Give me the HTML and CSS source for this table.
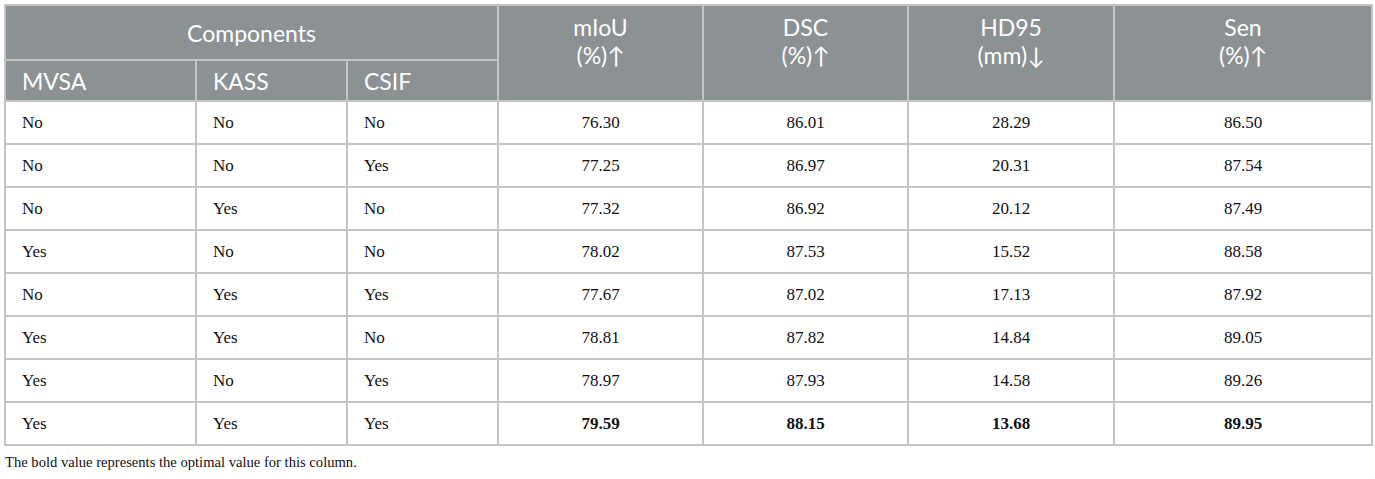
FILE: index.html
```html
<!DOCTYPE html>
<html>
<head>
<meta charset="utf-8">
<link rel="stylesheet" href="styles.css">
</head>
<body>
<div class="wrap">
<table class="results">
  <colgroup>
    <col class="c1"><col class="c2"><col class="c3"><col class="c4"><col class="c5"><col class="c6"><col class="c7">
  </colgroup>
  <thead>
    <tr class="h1">
      <th colspan="3" class="center">Components</th>
      <th rowspan="2" class="metric">mIoU<br>(%)↑</th>
      <th rowspan="2" class="metric">DSC<br>(%)↑</th>
      <th rowspan="2" class="metric">HD95<br>(mm)↓</th>
      <th rowspan="2" class="metric">Sen<br>(%)↑</th>
    </tr>
    <tr class="h2">
      <th>MVSA</th><th>KASS</th><th>CSIF</th>
    </tr>
  </thead>
  <tbody>
    <tr><td>No</td><td>No</td><td>No</td><td class="num">76.30</td><td class="num">86.01</td><td class="num">28.29</td><td class="num">86.50</td></tr>
    <tr><td>No</td><td>No</td><td>Yes</td><td class="num">77.25</td><td class="num">86.97</td><td class="num">20.31</td><td class="num">87.54</td></tr>
    <tr><td>No</td><td>Yes</td><td>No</td><td class="num">77.32</td><td class="num">86.92</td><td class="num">20.12</td><td class="num">87.49</td></tr>
    <tr><td>Yes</td><td>No</td><td>No</td><td class="num">78.02</td><td class="num">87.53</td><td class="num">15.52</td><td class="num">88.58</td></tr>
    <tr><td>No</td><td>Yes</td><td>Yes</td><td class="num">77.67</td><td class="num">87.02</td><td class="num">17.13</td><td class="num">87.92</td></tr>
    <tr><td>Yes</td><td>Yes</td><td>No</td><td class="num">78.81</td><td class="num">87.82</td><td class="num">14.84</td><td class="num">89.05</td></tr>
    <tr><td>Yes</td><td>No</td><td>Yes</td><td class="num">78.97</td><td class="num">87.93</td><td class="num">14.58</td><td class="num">89.26</td></tr>
    <tr><td>Yes</td><td>Yes</td><td>Yes</td><td class="num best">79.59</td><td class="num best">88.15</td><td class="num best">13.68</td><td class="num best">89.95</td></tr>
  </tbody>
</table>
<p class="note">The bold value represents the optimal value for this column.</p>
</div>
</body>
</html>
```

FILE: styles.css
```css
html, body {
  margin: 0;
  padding: 0;
  background: #ffffff;
}
.wrap {
  padding: 4px 4px 0 4px;
}
.results {
  border-collapse: collapse;
  table-layout: fixed;
  width: 1367px;
  border: 2px solid #c4c4c4;
}
.c1 { width: 191px; }
.c2 { width: 151px; }
.c3 { width: 151px; }
.c4 { width: 205px; }
.c5 { width: 205px; }
.c6 { width: 206px; }
.c7 { width: 258px; }
th, td {
  border: 2px solid #c4c4c4;
  padding: 0 16px;
}
thead th {
  background: #8c9194;
  color: #ffffff;
  font-family: Lato, "Open Sans", sans-serif;
  font-weight: 400;
  font-size: 23px;
  line-height: 28px;
  text-align: left;
}
thead th.center, thead th.metric {
  text-align: center;
}
.h1 th { height: 53px; }
.h1 th.metric {
  vertical-align: top;
  padding-top: 8px;
  line-height: 27.5px;
}
.h2 th { height: 39px; }
tbody td {
  font-family: "Liberation Serif", "Times New Roman", serif;
  font-size: 17px;
  color: #111111;
  height: 41px;
}
td.num { text-align: center; }
td.best { font-weight: 700; }
.note {
  margin: 8px 0 0 1px;
  font-family: "Liberation Serif", "Times New Roman", serif;
  font-size: 14.6px;
  color: #111111;
}
```
